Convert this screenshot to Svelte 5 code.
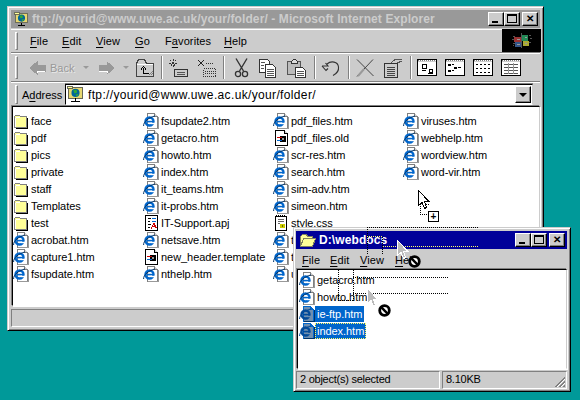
<script>
	const mainFiles = [
		['folder', 'face'], ['folder', 'pdf'], ['folder', 'pics'], ['folder', 'private'], ['folder', 'staff'],
		['folder', 'Templates'], ['folder', 'test'], ['ie', 'acrobat.htm'], ['ie', 'capture1.htm'], ['ie', 'fsupdate.htm'],
		['ie', 'fsupdate2.htm'], ['ie', 'getacro.htm'], ['ie', 'howto.htm'], ['ie', 'index.htm'], ['ie', 'it_teams.htm'],
		['ie', 'it-probs.htm'], ['apj', 'IT-Support.apj'], ['ie', 'netsave.htm'], ['bin', 'new_header.template'], ['ie', 'nthelp.htm'],
		['ie', 'pdf_files.htm'], ['bin', 'pdf_files.old'], ['ie', 'scr-res.htm'], ['ie', 'search.htm'], ['ie', 'sim-adv.htm'],
		['ie', 'simeon.htm'], ['css', 'style.css'], ['ie', 'tips.htm'], ['ie', 'tools.htm'], ['ie', 'upload.htm'],
		['ie', 'viruses.htm'], ['ie', 'webhelp.htm'], ['ie', 'wordview.htm'], ['ie', 'word-vir.htm']
	];

	const localFiles = [
		{ name: 'getacro.htm' },
		{ name: 'howto.htm' },
		{ name: 'ie-ftp.htm', selected: true },
		{ name: 'index.htm', selected: true, focused: true }
	];

	// detail view grids on the toolbar's last button
	const gridRows = [5, 8, 11, 14];
</script>

{#snippet folderIcon()}
	<svg class="ico" width="16" height="16" viewBox="0 0 16 16" shape-rendering="crispEdges">
		<path d="M1.5 3.5 L2.5 2.5 H6.5 L7.5 3.5 H13.5 V14.5 H1.5 Z" fill="#ffff99" stroke="#808080" />
		<path d="M14.5 4.5 V15.5 H2.5" fill="none" stroke="#000" />
		<path d="M2.5 4.5 H6.5 M2.5 4.5 V13.5" fill="none" stroke="#fff" />
	</svg>
{/snippet}

{#snippet ieIcon(selected)}
	<svg class="ico" width="16" height="16" viewBox="0 0 16 16">
		<path d="M4.5 .5 H11.5 L14.5 3.5 V15.5 H4.5 Z" fill={selected ? '#6f8fb0' : '#fff'} stroke={selected ? '#06c' : '#808080'} shape-rendering="crispEdges" />
		<path d="M11.5 .5 V3.5 H14.5" fill={selected ? '#06c' : '#ccc'} stroke={selected ? '#06c' : '#808080'} shape-rendering="crispEdges" />
		<path d="M15.5 4 V15.5 H5" fill="none" stroke={selected ? '#036' : '#999'} shape-rendering="crispEdges" />
		<circle cx="6.5" cy="8.5" r="4" fill="none" stroke={selected ? '#024a99' : '#06c'} stroke-width="2.4" />
		<rect x="3.5" y="7.8" width="7.5" height="1.6" fill={selected ? '#024a99' : '#06c'} />
		<rect x="7.5" y="9.8" width="4.5" height="1.4" fill={selected ? '#6f8fb0' : '#fff'} />
		<path d="M.6 13 C.2 9 6 4.2 12 3" fill="none" stroke={selected ? '#024a99' : '#036'} stroke-width="1" />
	</svg>
{/snippet}

{#snippet binIcon()}
	<svg class="ico" width="16" height="16" viewBox="0 0 16 16" shape-rendering="crispEdges">
		<path d="M2.5 .5 H11.5 L14.5 3.5 V15.5 H2.5 Z" fill="#fff" stroke="#000" />
		<path d="M11.5 .5 V3.5 H14.5" fill="#ccc" stroke="#000" />
		<rect x="7" y="6" width="6" height="6" fill="#000" />
		<rect x="4" y="7" width="5" height="1" fill="#c00" />
		<rect x="4" y="10" width="5" height="1" fill="#06c" />
		<rect x="9" y="8" width="2" height="2" fill="#999" />
	</svg>
{/snippet}

{#snippet apjIcon()}
	<svg class="ico" width="16" height="16" viewBox="0 0 16 16" shape-rendering="crispEdges">
		<path d="M2.5 .5 H14.5 V15.5 H2.5 Z" fill="#fff" stroke="#000" />
		<path d="M5 3.5 H8 M5 6.5 H7 M5 9.5 H8 M5 12.5 H7" stroke="#000" />
		<path d="M9 3.5 H13 M9 6.5 H13" stroke="#06c" />
		<path d="M8 13.5 L11 8.5 L13.5 13.5 M9 11.5 H13" fill="none" stroke="#c00" />
	</svg>
{/snippet}

{#snippet cssIcon()}
	<svg class="ico" width="16" height="16" viewBox="0 0 16 16" shape-rendering="crispEdges">
		<path d="M2.5 1.5 H13.5 V15.5 H2.5 Z" fill="#fff" stroke="#000" />
		<path d="M3 .5 H13" stroke="#000" stroke-dasharray="1 1" />
		<path d="M5 4.5 H11 M5 6.5 H11 M5 8.5 H7" stroke="#666" />
		<rect x="7" y="9" width="5" height="4" fill="#cc0" />
		<rect x="9" y="10" width="1" height="2" fill="#660" />
	</svg>
{/snippet}

{#snippet fileIcon(kind)}
	{#if kind === 'folder'}
		{@render folderIcon()}
	{:else if kind === 'ie'}
		{@render ieIcon(false)}
	{:else if kind === 'bin'}
		{@render binIcon()}
	{:else if kind === 'apj'}
		{@render apjIcon()}
	{:else}
		{@render cssIcon()}
	{/if}
{/snippet}

{#snippet siteIcon(size)}
	<svg width={size} height={size} viewBox="0 0 16 16" class="site">
		<rect x="1.5" y="1.5" width="13" height="10" fill="#e8d870" stroke="#665" shape-rendering="crispEdges" />
		<rect x=".5" y=".5" width="5" height="2" fill="#ffff99" stroke="#665" shape-rendering="crispEdges" />
		<circle cx="8" cy="6.5" r="3.8" fill="#069" />
		<path d="M6 4 L9 3.5 L9.5 6 L7 7 Z M8 8 L11 7.5 L9 10 Z" fill="#3a3" />
		<path d="M8 11.5 V14 M4 14.5 H12" stroke="#000" stroke-width="1.2" shape-rendering="crispEdges" />
	</svg>
{/snippet}

{#snippet pointer(ghost)}
	<svg width="12" height="20" viewBox="0 0 12 20" shape-rendering="crispEdges">
		<path d="M.5 .5 V15.5 L4 12.5 L6.5 18.5 L8.5 17.5 L6.5 11.5 H11 Z" fill={ghost ? '#bbb' : '#fff'} stroke={ghost ? '#fff' : '#000'} />
	</svg>
{/snippet}

{#snippet noDrop()}
	<svg width="13" height="13" viewBox="0 0 13 13">
		<circle cx="6.5" cy="6.5" r="4.8" fill="#fff" stroke="#000" stroke-width="2.8" />
		<path d="M3.2 3.2 L9.8 9.8" stroke="#000" stroke-width="2.4" />
	</svg>
{/snippet}

{#snippet viewFrame()}
	<rect x=".5" y=".5" width="19" height="16" fill="#fff" stroke="#000" />
	<path d="M1 1.5 H19" stroke="#808080" stroke-dasharray="1 1" />
	<path d="M1 2.5 H19" stroke="#ccc" />
{/snippet}

<div class="win main">
	<div class="title inactive">
		{@render siteIcon(15)}
		<span class="caption">ftp://yourid@www.uwe.ac.uk/your/folder/ - Microsoft Internet Explorer</span>
		<div class="caps">
			<button class="cap min" aria-label="Minimize"><i></i></button>
			<button class="cap max" aria-label="Maximize"><i></i></button>
			<button class="cap close" aria-label="Close">✕</button>
		</div>
	</div>

	<div class="band menuband">
		<span class="grip"></span>
		<nav class="menu">
			<span><u>F</u>ile</span>
			<span><u>E</u>dit</span>
			<span><u>V</u>iew</span>
			<span><u>G</u>o</span>
			<span>F<u>a</u>vorites</span>
			<span><u>H</u>elp</span>
		</nav>
		<div class="throbber">
			<svg width="20" height="16" viewBox="0 0 20 16" shape-rendering="crispEdges">
				<rect x="2" y="4" width="7" height="5" fill="#933" />
				<rect x="10" y="2" width="6" height="6" fill="#285" />
				<rect x="3" y="9" width="7" height="5" fill="#358" />
				<rect x="11" y="8" width="6" height="5" fill="#aa3" />
				<path d="M1 3 H3 M0 6 H2 M1 10 H3 M1 12 H2 M17 2 H19 M18 5 H20 M17 9 H19 M9 0 V15" stroke="#555" />
				<path d="M5 6 H8 M5 11 H8 M13 4 H15 M13 10 H15" stroke="#999" />
			</svg>
		</div>
	</div>

	<div class="band toolband">
		<span class="grip"></span>
		<svg class="ml11" width="17" height="16" viewBox="0 0 17 16" shape-rendering="crispEdges">
			<path d="M8 2 L1 8 L8 14 V11 H16 V5 H8 Z" fill="#999" stroke="#999" />
			<path d="M8 13 V11 H16" fill="none" stroke="#fff" />
		</svg>
		<span class="back ml4">Back</span>
		<span class="caret ml8"></span>
		<svg class="ml9" width="17" height="16" viewBox="0 0 17 16" shape-rendering="crispEdges">
			<path d="M9 2 L16 8 L9 14 V11 H1 V5 H9 Z" fill="#999" stroke="#999" />
			<path d="M1 11 H9 V13" fill="none" stroke="#fff" />
		</svg>
		<span class="caret ml8"></span>
		<svg class="ml6" width="20" height="20" viewBox="0 0 20 20" shape-rendering="crispEdges">
			<path d="M1.5 5.5 L3.5 1.5 H9.5 L11.5 5.5 H18.5 V18.5 H1.5 Z" fill="#ccc" stroke="#444" />
			<path d="M2 6.5 H18" stroke="#fff" />
			<path d="M8.5 15.5 V9.5 M6 11.5 L8.5 8.5 L11 11.5 M8.5 15.5 H13.5" fill="none" stroke="#000" />
			<path d="M14 17 L18 13 M16 17 L18 15" stroke="#808080" />
		</svg>
		<span class="sep ml6"></span>
		<svg class="ml5" width="20" height="20" viewBox="0 0 20 20" shape-rendering="crispEdges">
			<path d="M6.5 11.5 H19.5 V18.5 H6.5 Z" fill="#ccc" stroke="#333" />
			<path d="M9 14.5 H17 M9 16.5 H17" stroke="#555" />
			<path d="M5 1 V10 M1 5.5 H10 M2 2 L8 9 M8 2 L2 9" stroke="#333" stroke-dasharray="2 1" />
		</svg>
		<svg class="ml9" width="20" height="20" viewBox="0 0 20 20" shape-rendering="crispEdges">
			<path d="M6.5 10.5 H18.5 V18.5 H6.5 Z" fill="#ccc" stroke="#333" stroke-dasharray="1 1" />
			<path d="M8 13.5 H17 M8 15.5 H17" stroke="#333" stroke-dasharray="1 1" />
			<path d="M1 2 L7 8 M7 2 L1 8" stroke="#222" />
			<path d="M9 5.5 H16" stroke="#333" stroke-dasharray="1 1" />
		</svg>
		<span class="sep ml6"></span>
		<svg class="ml9" width="15" height="20" viewBox="0 0 15 20">
			<path d="M2 .5 L9.5 13 M13 .5 L5.5 13" stroke="#333" stroke-width="1.4" fill="none" />
			<circle cx="4" cy="16" r="2.6" fill="#ccc" stroke="#333" stroke-width="1.3" />
			<circle cx="11" cy="16" r="2.6" fill="#ccc" stroke="#333" stroke-width="1.3" />
		</svg>
		<svg class="ml10" width="18" height="20" viewBox="0 0 18 20" shape-rendering="crispEdges">
			<path d="M.5 1.5 H8.5 L10.5 3.5 V14.5 H.5 Z" fill="#fff" stroke="#333" />
			<path d="M6.5 6.5 H13.5 L16.5 9.5 V19.5 H6.5 Z" fill="#fff" stroke="#333" />
			<path d="M2 4.5 H6 M2 7.5 H5 M2 10.5 H5 M8 11.5 H15 M8 13.5 H15 M8 15.5 H15 M8 17.5 H15" stroke="#555" />
		</svg>
		<svg class="ml10" width="19" height="20" viewBox="0 0 19 20" shape-rendering="crispEdges">
			<path d="M.5 3.5 H13.5 V16.5 H.5 Z" fill="#bbb" stroke="#555" />
			<path d="M4.5 3.5 L6.5 1.5 H8.5 L10.5 3.5 V5.5 H4.5 Z" fill="#ddd" stroke="#333" />
			<path d="M8.5 9.5 H15.5 L18.5 12.5 V19.5 H8.5 Z" fill="#fff" stroke="#333" />
			<path d="M10 13.5 H17 M10 15.5 H17 M10 17.5 H17" stroke="#555" />
		</svg>
		<span class="sep ml8"></span>
		<svg class="ml5" width="19" height="18" viewBox="0 0 19 18">
			<path d="M1 7 H7 L4.5 4 M1 7 L5 11.5 L7 9.5 M6 5 C10 1.5 17 2.5 17.5 8 C18 12 15 15 12 16.5" fill="none" stroke="#333" stroke-width="1.1" />
		</svg>
		<span class="sep ml8"></span>
		<svg class="ml6" width="18" height="18" viewBox="0 0 18 18">
			<path d="M1 .5 L17.5 17 M17 .5 L1 17.5" stroke="#444" stroke-width="1" fill="none" />
			<path d="M2 17 L8 10" stroke="#999" stroke-width="2" />
		</svg>
		<svg class="ml10" width="19" height="20" viewBox="0 0 19 20" shape-rendering="crispEdges">
			<path d="M.5 5.5 H13.5 V19.5 H.5 Z" fill="#ccc" stroke="#333" />
			<path d="M3 9.5 H11 M3 11.5 H11 M3 13.5 H11 M3 15.5 H11 M3 17.5 H11" stroke="#444" />
			<path d="M7 5 L11 1.5 H18 M13 5 L18 3" fill="none" stroke="#555" />
		</svg>
		<span class="sep ml7"></span>
		<svg class="ml5" width="20" height="17" viewBox="0 0 20 17" shape-rendering="crispEdges">
			{@render viewFrame()}
			<path d="M5 5.5 H9 V9 H5 Z M12 10.5 H15 V13 H12 Z" fill="#fff" stroke="#000" />
			<path d="M5 11.5 H9 M11 14.5 H16" stroke="#000" />
		</svg>
		<svg class="ml8" width="20" height="17" viewBox="0 0 20 17" shape-rendering="crispEdges">
			{@render viewFrame()}
			<path d="M3 5 H5 V6 H3 Z M3 11 H5 V12 H3 Z M9 8 H11 V9 H9 Z" fill="#000" stroke="#000" />
			<path d="M7 5.5 H9 M7 11.5 H9 M13 8.5 H16" stroke="#000" />
		</svg>
		<svg class="ml8" width="20" height="17" viewBox="0 0 20 17" shape-rendering="crispEdges">
			{@render viewFrame()}
			<path d="M3 5.5 H5 M7 5.5 H9 M11 5.5 H13 M15 5.5 H17 M3 9.5 H5 M7 9.5 H9 M11 9.5 H13 M15 9.5 H17 M3 13.5 H5 M7 13.5 H9 M11 13.5 H13 M15 13.5 H17" stroke="#000" />
		</svg>
		<svg class="ml8" width="20" height="17" viewBox="0 0 20 17" shape-rendering="crispEdges">
			{@render viewFrame()}
			{#each gridRows as y}
				<path d="M3 {y}.5 H17" stroke="#555" />
			{/each}
			<path d="M7.5 4 V15 M12.5 4 V15" stroke="#999" />
		</svg>
	</div>

	<div class="band addressband">
		<span class="grip"></span>
		<span class="addrlabel">A<u>d</u>dress</span>
		<div class="combo">
			{@render siteIcon(17)}
			<span class="url">ftp://yourid@www.uwe.ac.uk/your/folder/</span>
			<span class="dropbtn"><i></i></span>
		</div>
	</div>

	<div class="list mainlist">
		{#each mainFiles as [kind, name]}
			<div class="file">
				{@render fileIcon(kind)}
				<span>{name}</span>
			</div>
		{/each}
	</div>

	<div class="status mainstatus">
		<div class="panel grow"></div>
	</div>
</div>

<div class="win local">
	<div class="title active">
		<svg class="ico" width="17" height="15" viewBox="0 0 17 15" shape-rendering="crispEdges">
			<path d="M1.5 13.5 V3.5 L3.5 1.5 H7.5 L8.5 3.5 H13.5 V5.5 H16.5 L13.5 13.5 Z" fill="#ffff99" stroke="#808060" />
			<path d="M1.5 13.5 L4.5 5.5 H13.5" fill="none" stroke="#808060" />
		</svg>
		<span class="caption bright">D:\webdocs</span>
		<div class="caps">
			<button class="cap min" aria-label="Minimize"><i></i></button>
			<button class="cap max" aria-label="Maximize"><i></i></button>
			<button class="cap close" aria-label="Close">✕</button>
		</div>
	</div>

	<nav class="menu localmenu">
		<span><u>F</u>ile</span>
		<span><u>E</u>dit</span>
		<span><u>V</u>iew</span>
		<span><u>H</u>elp</span>
	</nav>

	<div class="list locallist">
		{#each localFiles as file}
			<div class="file">
				{@render ieIcon(file.selected)}
				<span class:selected={file.selected} class:focused={file.focused}>{file.name}</span>
			</div>
		{/each}
	</div>

	<div class="status localstatus">
		<div class="panel left">2 object(s) selected</div>
		<div class="panel right">
			8.10KB
			<svg class="sizer" width="12" height="12" viewBox="0 0 12 12" shape-rendering="crispEdges">
				<path d="M11 1 L1 11 M11 2 L2 11 M11 5 L5 11 M11 6 L6 11 M11 9 L9 11 M11 10 L10 11" stroke="#808080" />
				<path d="M11 3 L3 11 M11 7 L7 11" stroke="#fff" />
			</svg>
		</div>
	</div>
</div>

<!-- the drag in progress: outlines and cursors over both windows -->
<div class="drag" aria-hidden="true">
	<i class="dot h a1"></i>
	<i class="dot h light a2"></i>
	<i class="dot h light a3"></i>
	<i class="dot v a4"></i>
	<i class="dot v a5"></i>
	<i class="dot h b1"></i>
	<i class="dot h b2"></i>
	<i class="dot h b3"></i>
	<i class="dot h b4"></i>
	<i class="dot v b5"></i>
	<i class="dot v b6"></i>
	<i class="dot h c1"></i>
	<i class="dot h c2"></i>
	<i class="dot v c3"></i>

	<div class="cur p1">{@render pointer(false)}</div>
	<div class="plus">+</div>
	<div class="cur p2">{@render pointer(true)}</div>
	<div class="cur n2">{@render noDrop()}</div>
	<div class="cur p3">{@render pointer(true)}</div>
	<div class="cur n3">{@render noDrop()}</div>
</div>

<style>
	:global(body) {
		background: #009999;
		font-family: 'Liberation Sans', Arial, sans-serif;
		font-size: 11px;
		color: #000;
		overflow: hidden;
		height: 400px;
	}

	svg {
		display: block;
		flex: none;
	}

	u {
		text-decoration: underline;
		text-underline-offset: 2px;
	}

	.win {
		position: absolute;
		box-sizing: border-box;
		display: flex;
		flex-direction: column;
		background: #cccccc;
		padding: 2px;
		border: 1px solid;
		border-color: #cccccc #000 #000 #cccccc;
		box-shadow:
			inset 1px 1px 0 #fff,
			inset -1px -1px 0 #808080;
	}

	.main {
		left: 7px;
		top: 6px;
		width: 537px;
		height: 325px;
		padding: 3px;
	}

	.local {
		left: 293px;
		top: 227px;
		width: 278px;
		height: 165px;
		padding: 3px 3px 2px 2px;
	}

	.title {
		display: flex;
		align-items: center;
		height: 18px;
		flex: none;
		padding: 0 2px 0 3px;
		font-weight: 700;
	}

	.inactive {
		background: #999999;
		color: #cccccc;
	}

	.active {
		background: #000099;
		color: #fff;
	}

	.caption {
		margin-left: 3px;
		letter-spacing: 0.1px;
		font-size: 12px;
		white-space: nowrap;
	}

	.bright {
		letter-spacing: 0.1px;
	}

	.caps {
		display: flex;
		margin-left: auto;
	}

	.cap {
		box-sizing: border-box;
		width: 16px;
		height: 14px;
		padding: 0;
		background: #cccccc;
		border: 1px solid;
		border-color: #fff #000 #000 #fff;
		box-shadow: inset -1px -1px 0 #808080;
		position: relative;
		font: 700 10px 'Liberation Sans', sans-serif;
		line-height: 12px;
		color: #000;
	}

	.max {
		margin-right: 2px;
	}

	.cap i {
		position: absolute;
		display: block;
		box-sizing: border-box;
	}

	.min i {
		left: 3px;
		bottom: 2px;
		width: 6px;
		height: 2px;
		background: #000;
	}

	.max i {
		left: 2px;
		top: 1px;
		width: 10px;
		height: 9px;
		border: 1px solid #000;
		border-top-width: 2px;
	}

	.band {
		display: flex;
		align-items: center;
		flex: none;
		box-sizing: border-box;
		padding-left: 4px;
		border-top: 1px solid #fff;
		border-bottom: 1px solid #808080;
	}

	.grip {
		flex: none;
		width: 3px;
		box-sizing: border-box;
		border: 1px solid;
		border-color: #fff #808080 #808080 #fff;
	}

	.menuband {
		height: 24px;
		margin-top: 1px;
		position: relative;
	}

	.menuband .grip {
		height: 18px;
	}

	.menu {
		display: flex;
		margin-left: 12px;
		letter-spacing: 0.1px;
	}

	.menu span:nth-child(1) {
		width: 32px;
	}

	.menu span:nth-child(2) {
		width: 34px;
	}

	.menu span:nth-child(3) {
		width: 39px;
	}

	.menu span:nth-child(4) {
		width: 30px;
	}

	.menu span:nth-child(5) {
		width: 59px;
	}

	.throbber {
		position: absolute;
		right: -1px;
		top: -1px;
		width: 39px;
		height: 23px;
		background: #000;
		display: flex;
		align-items: center;
		justify-content: center;
	}

	.toolband {
		height: 29px;
	}

	.toolband .grip {
		height: 23px;
	}

	.back {
		width: 25px;
		color: #999;
		text-shadow: 1px 1px 0 #e8e8e8;
	}

	.caret {
		flex: none;
		width: 0;
		height: 0;
		border: 3px solid transparent;
		border-top: 3px solid #999;
		border-bottom: 0;
		border-left-width: 3.5px;
		border-right-width: 3.5px;
	}

	.sep {
		flex: none;
		width: 2px;
		height: 23px;
		box-sizing: border-box;
		border-left: 1px solid #808080;
		border-right: 1px solid #fff;
	}

	.ml4 { margin-left: 4px; }
	.ml5 { margin-left: 5px; }
	.ml6 { margin-left: 6px; }
	.ml7 { margin-left: 7px; }
	.ml8 { margin-left: 8px; }
	.ml9 { margin-left: 9px; }
	.ml10 { margin-left: 10px; }
	.ml11 { margin-left: 11px; }

	.addressband {
		height: 24px;
		border-bottom: 0;
	}

	.addressband .grip {
		height: 19px;
	}

	.addrlabel {
		margin-left: 4px;
		width: 43px;
	}

	.combo {
		display: flex;
		align-items: center;
		box-sizing: border-box;
		width: 468px;
		height: 21px;
		background: #fff;
		border: 1px solid;
		border-color: #000 #ccc #fff #000;
		box-shadow: 0 -1px 0 #808080;
		padding-left: 1px;
	}

	.url {
		margin-left: 4px;
		font-size: 12px;
		letter-spacing: 0.35px;
	}

	.dropbtn {
		margin-left: auto;
		box-sizing: border-box;
		width: 16px;
		height: 17px;
		margin-right: 1px;
		background: #cccccc;
		border: 1px solid;
		border-color: #fff #000 #000 #fff;
		box-shadow: inset -1px -1px 0 #808080;
		display: flex;
		align-items: center;
		justify-content: center;
	}

	.dropbtn i {
		display: block;
		border: 4px solid transparent;
		border-top: 4px solid #000;
		border-bottom: 0;
	}

	.list {
		background: #fff;
		box-sizing: border-box;
		border: 1px solid;
		border-color: #000 #ccc #fff #000;
		box-shadow:
			-1px -1px 0 #808080,
			1px 1px 0 #fff;
	}

	.mainlist {
		flex: 1;
		margin-left: 1px;
		display: grid;
		grid-auto-flow: column;
		grid-template-rows: repeat(10, 17px);
		grid-auto-columns: 130px;
		align-content: start;
		justify-content: start;
		overflow: hidden;
		padding: 5px 0 0 0;
	}

	.file {
		display: flex;
		align-items: center;
		white-space: nowrap;
		height: 17px;
		letter-spacing: -0.05px;
	}

	.file span {
		padding: 1px 2px;
		line-height: 14px;
	}

	.selected {
		background: #0066cc;
		color: #fff;
	}

	.focused {
		outline: 1px dotted #ffff66;
		outline-offset: -1px;
	}

	.status {
		display: flex;
		flex: none;
		height: 18px;
		margin-top: 2px;
		gap: 2px;
	}

	.panel {
		box-sizing: border-box;
		border: 1px solid;
		border-color: #808080 #fff #fff #808080;
		padding-left: 3px;
		line-height: 15px;
		letter-spacing: -0.25px;
		position: relative;
	}

	.grow {
		flex: 1;
	}

	.mainlist + .mainstatus {
		margin-top: 3px;
	}

	.localmenu {
		height: 19px;
		margin: 1px 0 0 6px;
		align-items: center;
		flex: none;
	}

	.localmenu span:nth-child(1) {
		width: 28px;
	}

	.localmenu span:nth-child(2) {
		width: 30px;
	}

	.localmenu span:nth-child(3) {
		width: 35px;
	}

	.locallist {
		flex: 1;
		margin-left: 1px;
		padding: 1px 0 0 1px;
		overflow: hidden;
	}

	.left {
		width: 144px;
	}

	.right {
		flex: 1;
	}

	.sizer {
		position: absolute;
		right: 0;
		bottom: 0;
	}

	.drag {
		position: absolute;
		inset: 0;
		width: 580px;
		height: 400px;
		pointer-events: none;
		overflow: hidden;
	}

	.dot {
		position: absolute;
		display: block;
		--ink: #000;
	}

	.dot.light {
		--ink: #ffff66;
	}

	.dot.h {
		height: 1px;
		background: repeating-linear-gradient(90deg, var(--ink) 0 1px, transparent 1px 2px);
	}

	.dot.v {
		width: 1px;
		background: repeating-linear-gradient(0deg, var(--ink) 0 1px, transparent 1px 2px);
	}

	.a1 { left: 367px; top: 227px; width: 112px; }
	.a2 { left: 367px; top: 236px; width: 16px; }
	.a3 { left: 383px; top: 246px; width: 96px; }
	.a4 { left: 367px; top: 227px; height: 27px; }
	.a5 { left: 382px; top: 236px; height: 18px; }
	.b1 { left: 338px; top: 269px; width: 16px; }
	.b2 { left: 353px; top: 277px; width: 96px; }
	.b3 { left: 353px; top: 293px; width: 96px; }
	.b4 { left: 338px; top: 300px; width: 16px; }
	.b5 { left: 338px; top: 269px; height: 32px; }
	.b6 { left: 353px; top: 269px; height: 32px; }
	.c1 { left: 420px; top: 204px; width: 9px; }
	.c2 { left: 420px; top: 214px; width: 9px; }
	.c3 { left: 420px; top: 204px; height: 11px; }

	.cur {
		position: absolute;
	}

	.p1 { left: 418px; top: 190px; }
	.p2 { left: 397px; top: 240px; }
	.n2 { left: 408px; top: 255px; }
	.p3 { left: 367px; top: 288px; }
	.n3 { left: 378px; top: 304px; }

	.plus {
		position: absolute;
		left: 428px;
		top: 211px;
		box-sizing: border-box;
		width: 11px;
		height: 11px;
		border: 1px solid #000;
		background: #fff;
		font: 700 10px/9px 'Liberation Sans', sans-serif;
		text-align: center;
	}
</style>
